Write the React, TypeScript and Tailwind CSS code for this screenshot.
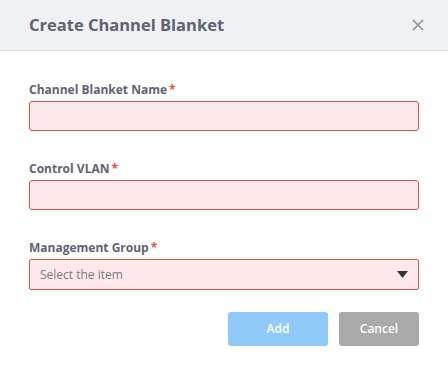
import { ChangeEvent } from 'react'

const fields = [
  { id: 'name', label: 'Channel Blanket Name' },
  { id: 'vlan', label: 'Control VLAN' },
] as const

const font = { fontFamily: '"Open Sans", "Liberation Sans", sans-serif' }

function Label({ text }: { text: string }) {
  return (
    <label className="mb-[3px] flex items-center text-[12px] font-bold leading-[16px] text-[#5f6371]">
      {text}
      <span className="ml-[2px] text-[#e8503a]">*</span>
    </label>
  )
}

export default function App() {
  const noop = (_e: ChangeEvent<HTMLInputElement>) => {}

  return (
    <div className="h-[366px] w-[448px] bg-white" style={font}>
      <div className="flex h-[51px] items-center justify-between border-b border-[#dcdde2] bg-[#f0f1f5] pl-[29px] pr-[24px]">
        <h2 className="text-[16.5px] font-bold text-[#5f6371]">Create Channel Blanket</h2>
        <button className="flex h-[12px] w-[12px] items-center justify-center">
          <svg width="12" height="12" viewBox="0 0 12 12">
            <path d="M1 1L11 11M11 1L1 11" stroke="#8b8f9c" strokeWidth="1.6" />
          </svg>
        </button>
      </div>

      <div className="flex flex-col px-[29px] pt-[31px]">
        {fields.map((f) => (
          <div key={f.id} className="mb-[30px] flex flex-col">
            <Label text={f.label} />
            <input
              value=""
              onChange={noop}
              className="h-[30px] rounded-[3px] border border-[#e5533d] bg-[#ffe9ea] outline-none"
            />
          </div>
        ))}

        <div className="flex flex-col">
          <Label text="Management Group" />
          <div className="flex h-[31px] items-center justify-between rounded-[2px] border border-[#e5533d] bg-[#ffe9ea] pl-[10px] pr-[10px]">
            <span className="text-[12px] text-[#7a7a7a]">Select the item</span>
            <svg width="11" height="7" viewBox="0 0 11 7">
              <path d="M0 0H11L5.5 7Z" fill="#333" />
            </svg>
          </div>
        </div>

        <div className="mt-[22px] flex justify-end gap-[11px]">
          <button className="h-[34px] w-[100px] rounded-[3px] bg-[#90caf9] text-[12px] font-semibold text-white">
            Add
          </button>
          <button className="h-[34px] w-[80px] rounded-[3px] bg-[#aaaaaa] text-[12px] font-semibold text-white">
            Cancel
          </button>
        </div>
      </div>
    </div>
  )
}
